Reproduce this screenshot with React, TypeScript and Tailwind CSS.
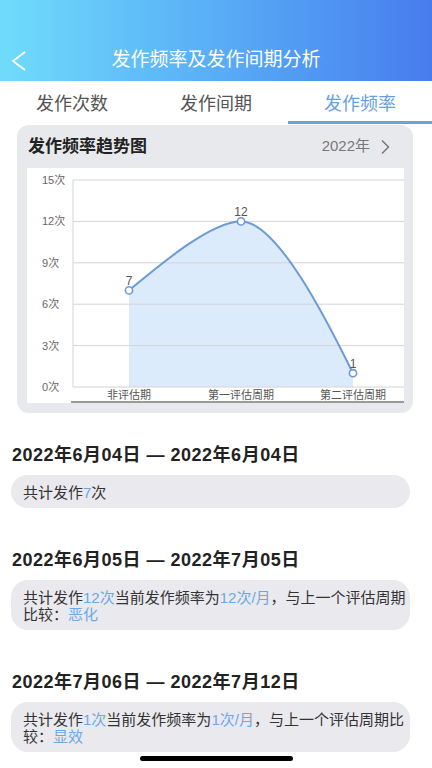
import { FC } from "react"

const font = { fontFamily: '"Liberation Sans", "Noto Sans CJK SC", sans-serif' }

const yTicks = [15, 12, 9, 6, 3, 0]
const points = [
  { label: "非评估期", x: 102, v: 7 },
  { label: "第一评估周期", x: 214, v: 12 },
  { label: "第二评估周期", x: 326, v: 1 },
]
const yOf = (v: number) => 219 - v * 13.8

const curve = "M102,122.4 C135,95 185,53 214,53.4 C252,53 306,165 326,205.2"
const area = curve + " L326,219 L102,219 Z"

const Chart: FC = () => (
  <svg width="377" height="235" viewBox="0 0 377 235" style={font}>
    <path d={area} fill="#d6e7fa" fillOpacity="0.85" />
    {yTicks.map((t) => (
      <g key={t}>
        <line x1="46" x2="377" y1={yOf(t)} y2={yOf(t)} stroke="#d4d4d4" strokeWidth="1" />
        <text x="15" y={yOf(t) + 4} fontSize="11" fill="#666">
          {t}次
        </text>
      </g>
    ))}
    <line x1="46" x2="46" y1={yOf(15)} y2="219" stroke="#d4d4d4" strokeWidth="1" />
    <path d={curve} fill="none" stroke="#6b9ad6" strokeWidth="2" />
    {points.map((p) => (
      <g key={p.label}>
        <circle cx={p.x} cy={yOf(p.v)} r="3.6" fill="#fff" stroke="#6b9ad6" strokeWidth="1.6" />
        <text x={p.x} y={yOf(p.v) - 5} fontSize="12" fill="#555" textAnchor="middle">
          {p.v}
        </text>
        <text x={p.x} y="231" fontSize="11" fill="#555" textAnchor="middle">
          {p.label}
        </text>
      </g>
    ))}
    <line x1="44" x2="377" y1="234" y2="234" stroke="#9a9a9a" strokeWidth="2" />
  </svg>
)

const Blue: FC<{ children: React.ReactNode }> = ({ children }) => (
  <span className="text-[#6ea7e6]">{children}</span>
)

const Section: FC<{ title: string; children: React.ReactNode; first?: boolean }> = ({
  title,
  children,
  first,
}) => (
  <div className={first ? "mt-[30px]" : "mt-[40px]"}>
    <div className="ml-[12px] h-[24px] leading-[24px] tracking-[0.5px] text-[18px] font-bold text-[#222]">
      {title}
    </div>
    <div className="ml-[11px] mt-[8px] w-[399px] rounded-[17px] bg-[#e9e9ee] pl-[12px] pr-[2px] pt-[9px] pb-[7px] text-[15px] leading-[17px] text-[#333]">
      {children}
    </div>
  </div>
)

const App: FC = () => {
  const tabs = ["发作次数", "发作间期", "发作频率"]
  return (
    <div className="relative h-[768px] w-[432px] overflow-hidden bg-white" style={font}>
      <div className="flex h-[81px] items-center bg-gradient-to-r from-[#70dcfb] to-[#487cee] pt-[40px]">
        <div className="flex w-[40px] pl-[10px]">
          <svg width="18" height="22" viewBox="0 0 18 22">
            <path d="M15 2 L3 11 L15 20" fill="none" stroke="#fff" strokeWidth="1.8" />
          </svg>
        </div>
        <div className="flex-1 pr-[40px] text-center text-[19px] text-white">发作频率及发作间期分析</div>
      </div>

      <div className="flex">
        {tabs.map((t, i) => (
          <div
            key={t}
            className={
              i === 2
                ? "flex h-[43px] flex-1 items-center justify-center border-b-[3px] border-[#6ba2e2] pt-[6px] text-[18px] text-[#6a9fdf]"
                : "flex h-[43px] flex-1 items-center justify-center border-b-[3px] border-transparent pt-[6px] text-[18px] text-[#555]"
            }
          >
            {t}
          </div>
        ))}
      </div>

      <div className="ml-[17px] mt-[1px] w-[396px] rounded-[12px] bg-[#e8e9ed] pb-[10px] pl-[10px] pr-[9px]">
        <div className="flex h-[43px] items-center justify-between pl-[1px] pr-[14px]">
          <span className="text-[17px] font-bold text-[#222]">发作频率趋势图</span>
          <span className="flex items-center gap-[10px] text-[15px] text-[#777]">
            2022年
            <svg width="10" height="16" viewBox="0 0 10 16">
              <path d="M2 1.5 L8.5 8 L2 14.5" fill="none" stroke="#777" strokeWidth="1.5" />
            </svg>
          </span>
        </div>
        <div className="bg-white">
          <Chart />
        </div>
      </div>

      <Section title="2022年6月04日 — 2022年6月04日" first>
        共计发作<Blue>7</Blue>次
      </Section>
      <Section title="2022年6月05日 — 2022年7月05日">
        共计发作<Blue>12次</Blue>当前发作频率为<Blue>12次/月</Blue>，与上一个评估周期
        <br />
        比较：<Blue>恶化</Blue>
      </Section>
      <Section title="2022年7月06日 — 2022年7月12日">
        共计发作<Blue>1次</Blue>当前发作频率为<Blue>1次/月</Blue>，与上一个评估周期比
        <br />
        较：<Blue>显效</Blue>
      </Section>

      <div className="absolute left-[140px] top-[756px] h-[5px] w-[153px] rounded-full bg-black" />
    </div>
  )
}

export default App
